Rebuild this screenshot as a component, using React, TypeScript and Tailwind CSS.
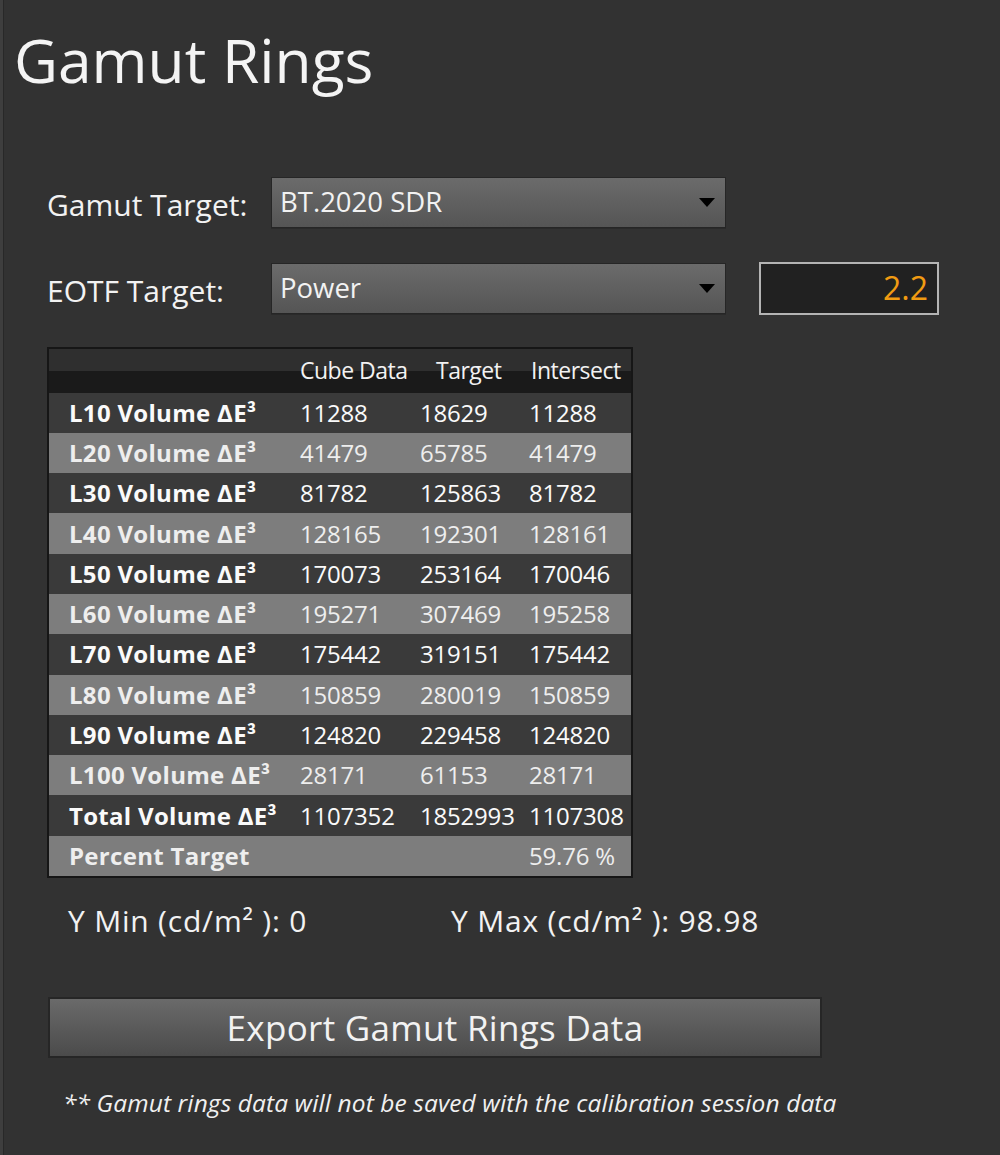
import React from "react";

const ROWS = [
  ["L10 Volume ΔE³", "11288", "18629", "11288"],
  ["L20 Volume ΔE³", "41479", "65785", "41479"],
  ["L30 Volume ΔE³", "81782", "125863", "81782"],
  ["L40 Volume ΔE³", "128165", "192301", "128161"],
  ["L50 Volume ΔE³", "170073", "253164", "170046"],
  ["L60 Volume ΔE³", "195271", "307469", "195258"],
  ["L70 Volume ΔE³", "175442", "319151", "175442"],
  ["L80 Volume ΔE³", "150859", "280019", "150859"],
  ["L90 Volume ΔE³", "124820", "229458", "124820"],
  ["L100 Volume ΔE³", "28171", "61153", "28171"],
  ["Total Volume ΔE³", "1107352", "1852993", "1107308"],
  ["Percent Target", "", "", "59.76 %"],
];

const FONT = { fontFamily: '"Open Sans", "Noto Sans", sans-serif' };

function Dropdown({ value }: { value: string }) {
  return (
    <div className="w-[455px] h-[51px] flex items-center justify-between pl-[8px] pr-[10px] border border-[#262626] bg-[linear-gradient(to_bottom,#6b6b6b,#555555)] shadow-[0_1px_0_#2a2a2a]">
      <span className="text-[27.5px] leading-none text-[#f2f2f2]">{value}</span>
      <svg width="16" height="9" viewBox="0 0 16 9">
        <path d="M0 0 L16 0 L8 9 Z" fill="#000" />
      </svg>
    </div>
  );
}

export default function App() {
  return (
    <div
      style={FONT}
      className="w-[1000px] h-[1155px] bg-[#323232] border-l-[3px] border-[#3e3e3e] relative overflow-hidden"
    >
      <div className="border-l border-[#282828] h-full pl-[10px]">
        <h1 className="text-[60.5px] leading-none text-[#f4f4f4] pt-[30px]">
          Gamut Rings
        </h1>

        <div className="mt-[86px] pl-[33px] flex flex-col gap-[34px]">
          <div className="flex items-center">
            <span className="w-[224px] text-[30px] leading-none text-[#f2f2f2] pt-[6px]">Gamut Target:</span>
            <Dropdown value="BT.2020 SDR" />
          </div>
          <div className="flex items-center">
            <span className="w-[224px] text-[30px] leading-none text-[#f2f2f2] pt-[6px]">EOTF Target:</span>
            <Dropdown value="Power" />
            <div className="ml-[33px] w-[180px] h-[53px] border-2 border-[#b4b4b4] bg-[#212121] flex items-center justify-end pr-[9px]">
              <span className="text-[32px] leading-none text-[#f09b12]">2.2</span>
            </div>
          </div>
        </div>

        <div className="mt-[32px] ml-[33px] w-[586px] border-2 border-[#161616] text-[24px]">
          <div className="h-[44px] grid grid-cols-[251px_120px_109px_102px] items-center bg-[linear-gradient(to_bottom,#2f2f2f_50%,#1a1a1a_50%)] text-[#f2f2f2] text-[23px] tracking-[-0.5px]">
            <span />
            <span>Cube Data</span>
            <span className="pl-[16px]">Target</span>
            <span className="pl-[2px]">Intersect</span>
          </div>
          {ROWS.map((r, i) => (
            <div
              key={r[0]}
              className={`h-[40.3px] grid grid-cols-[251px_120px_109px_102px] items-center leading-none ${
                i % 2 === 0 ? "bg-[#3a3a3a] text-[#fafafa]" : "bg-[#7d7d7d] text-[#eeeeee]"
              }`}
            >
              <span className="pl-[20px] font-bold tracking-[0.3px] whitespace-nowrap">{r[0]}</span>
              <span className="tracking-[-0.2px]">{r[1]}</span>
              <span className="tracking-[-0.2px]">{r[2]}</span>
              <span className="tracking-[-0.2px]">{r[3]}</span>
            </div>
          ))}
        </div>

        <div className="mt-[23px] ml-[54px] flex text-[30px] leading-[40px] text-[#f2f2f2] tracking-[0.8px]">
          <span className="w-[383px]">Y Min (cd/m² ): 0</span>
          <span>Y Max (cd/m² ): 98.98</span>
        </div>

        <div className="mt-[56px] ml-[34px] w-[774px] h-[61px] border-2 border-[#262626] bg-[linear-gradient(to_bottom,#6a6a6a,#4b4b4b)] flex items-center justify-center">
          <span className="text-[35px] leading-none text-[#f2f2f2] tracking-[0.3px]">Export Gamut Rings Data</span>
        </div>

        <p className="mt-[28px] ml-[49px] text-[24.5px] leading-[34px] italic text-[#f0f0f0] tracking-[0.1px]">
          ** Gamut rings data will not be saved with the calibration session data
        </p>
      </div>
    </div>
  );
}
